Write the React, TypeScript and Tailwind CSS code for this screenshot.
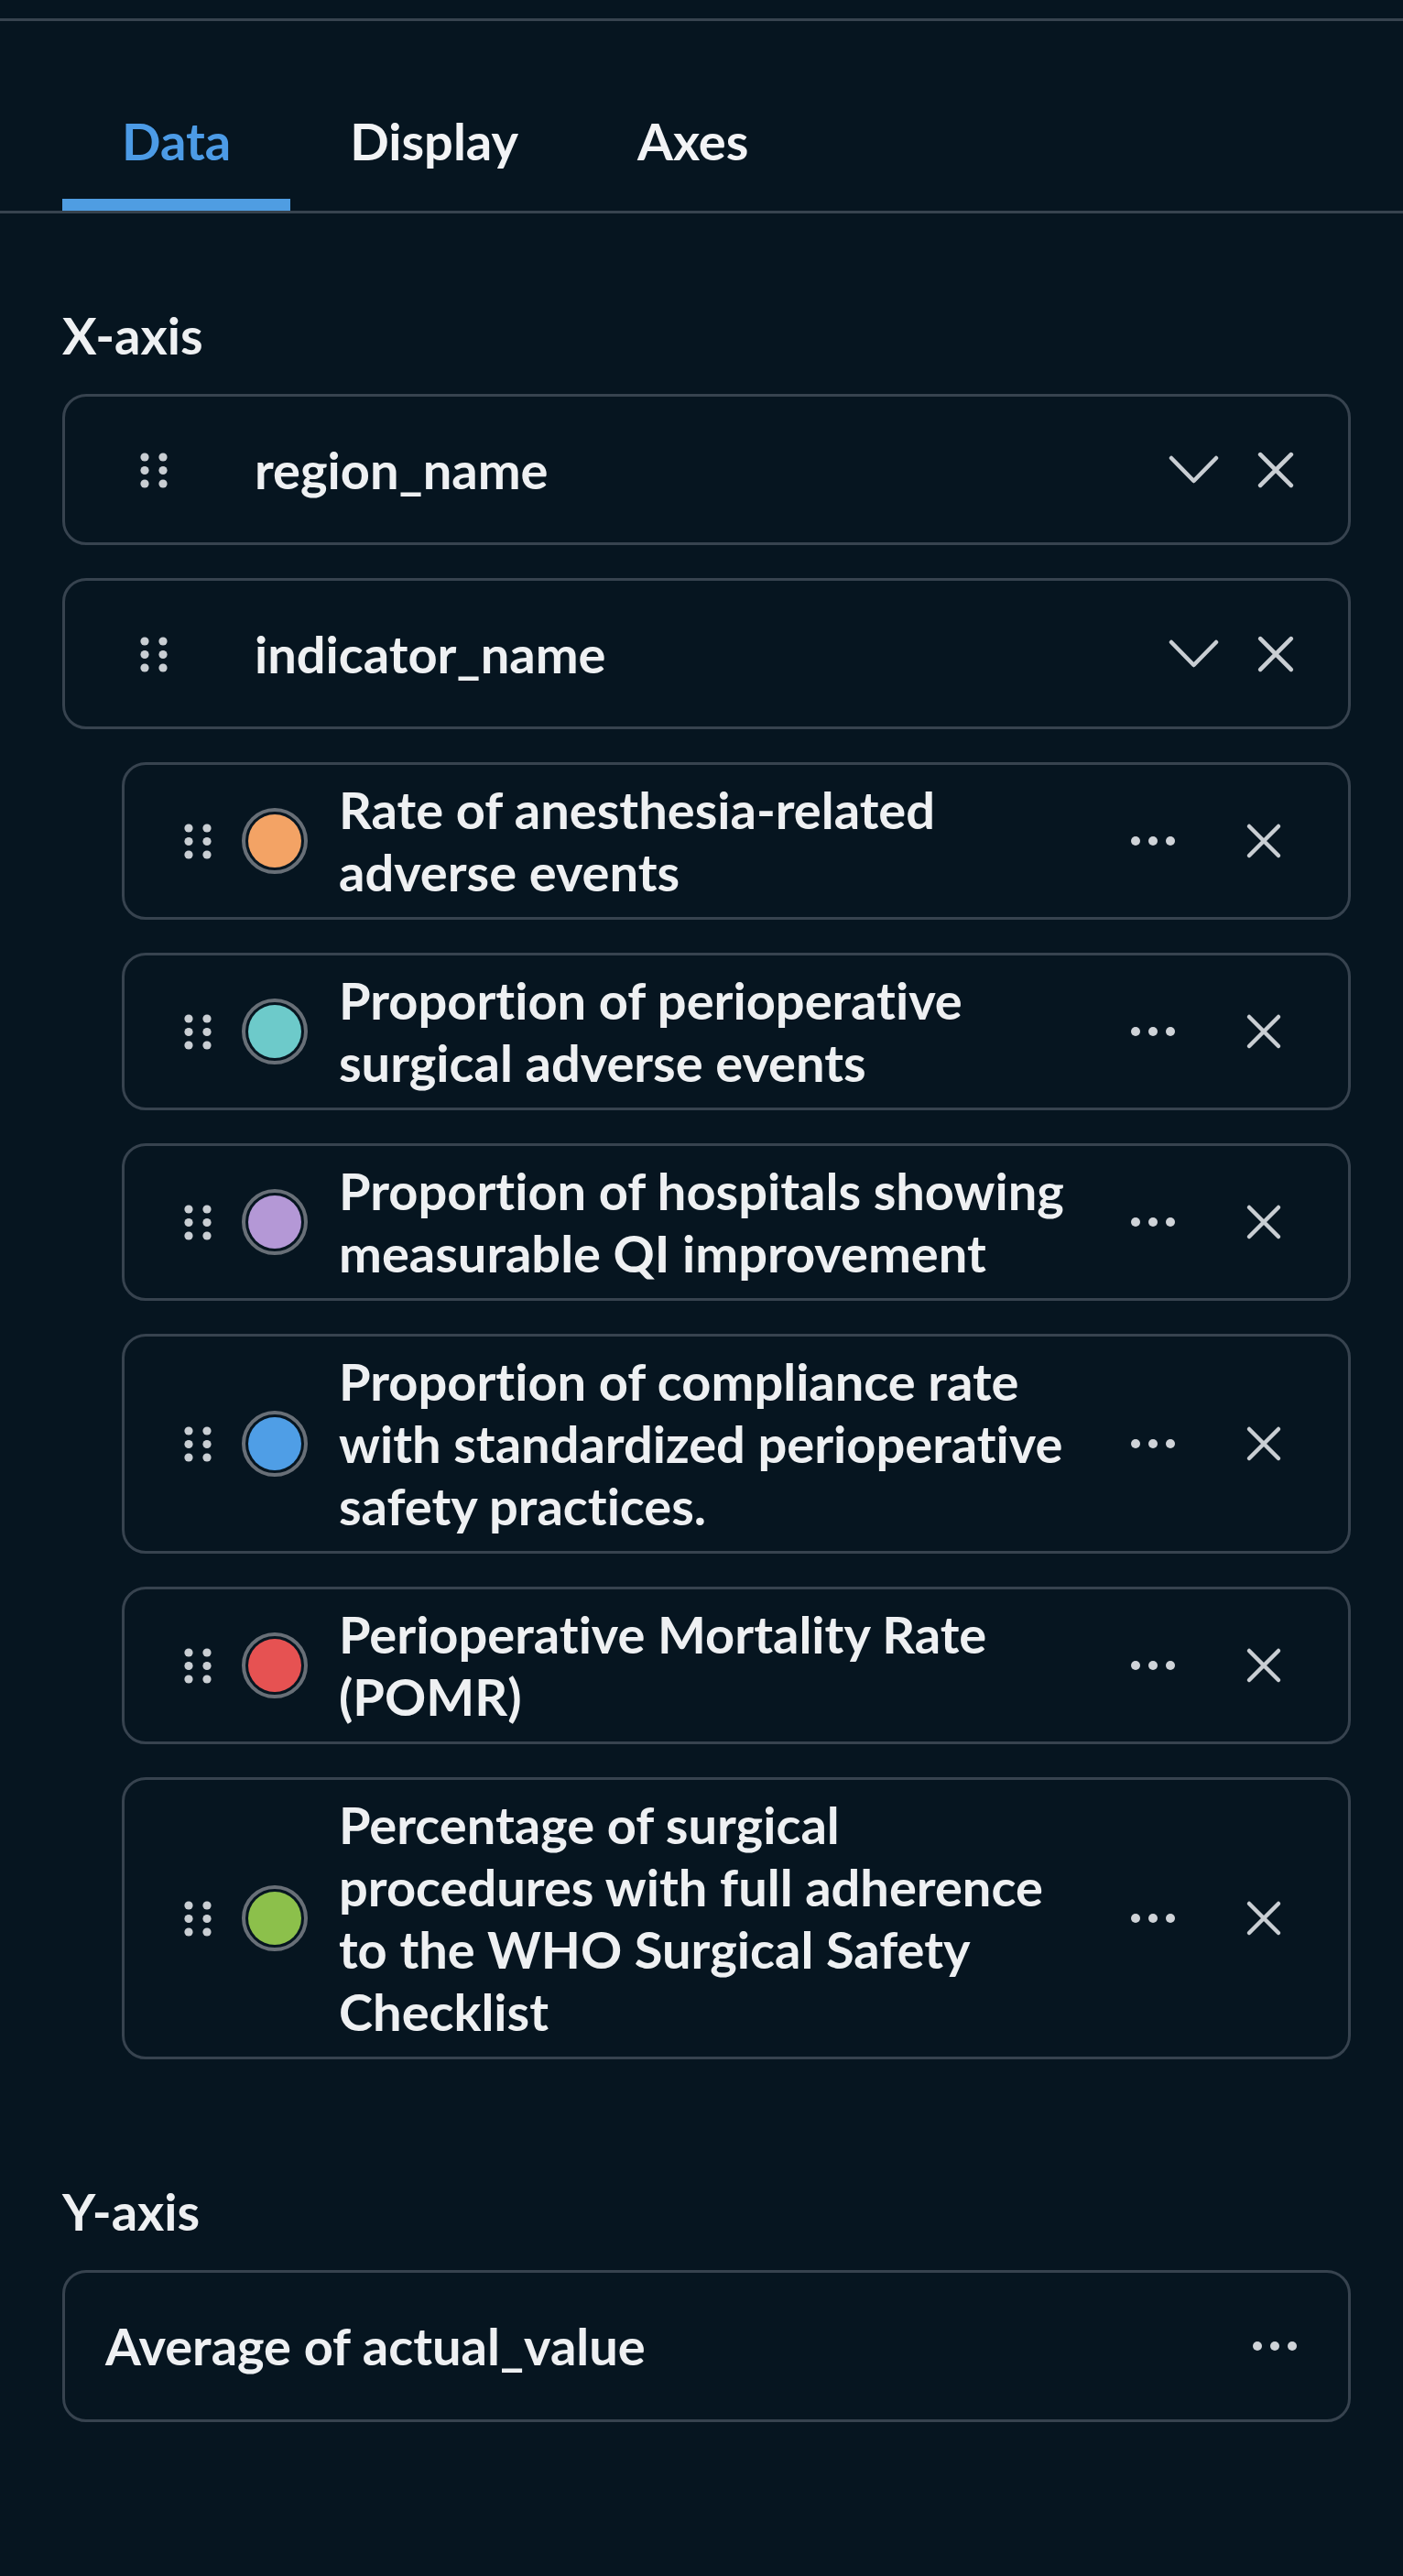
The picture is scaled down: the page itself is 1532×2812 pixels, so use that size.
import React from "react";

const Grip = () => (
  <svg width="32" height="40" viewBox="0 0 32 40" className="shrink-0">
    {[6, 26].map((cx) =>
      [6, 20.5, 35].map((cy) => (
        <circle key={`${cx}-${cy}`} cx={cx} cy={cy} r="4.6" fill="#c9ced3" />
      ))
    )}
  </svg>
);

const Dots = () => (
  <svg width="50" height="12" viewBox="0 0 50 12" className="shrink-0">
    <circle cx="6" cy="6" r="5" fill="#cfd3d8" />
    <circle cx="25" cy="6" r="5" fill="#cfd3d8" />
    <circle cx="44" cy="6" r="5" fill="#cfd3d8" />
  </svg>
);

const XIcon = ({ size = 40 }: { size?: number }) => (
  <svg width={size} height={size} viewBox="0 0 40 40" className="shrink-0">
    <path d="M4 4 L36 36 M36 4 L4 36" stroke="#c9ced3" strokeWidth="4.5" strokeLinecap="round" fill="none" />
  </svg>
);

const Chevron = () => (
  <svg width="55" height="31" viewBox="0 0 55 31" className="shrink-0">
    <path d="M3 3 L27.5 28 L52 3" stroke="#c9ced3" strokeWidth="4.5" strokeLinecap="round" strokeLinejoin="round" fill="none" />
  </svg>
);

const items = [
  { color: "#f3a365", text: "Rate of anesthesia-related adverse events" },
  { color: "#6dcaca", text: "Proportion of perioperative surgical adverse events" },
  { color: "#b498d6", text: "Proportion of hospitals showing measurable QI improvement" },
  { color: "#4f9ee6", text: "Proportion of compliance rate with standardized perioperative safety practices." },
  { color: "#e65252", text: "Perioperative Mortality Rate (POMR)" },
  { color: "#8cc04b", text: "Percentage of surgical procedures with full adherence to the WHO Surgical Safety Checklist" },
];

const FieldBox = ({ label }: { label: string }) => (
  <div className="flex h-[165px] items-center rounded-[26px] border-[3px] border-[#37434f] pl-[81px] pr-[58px]">
    <Grip />
    <div className="ml-[94px] flex-1 text-[56px] font-bold leading-[68px] text-[#eef0f2]">{label}</div>
    <Chevron />
    <div className="ml-[41px]">
      <XIcon size={42} />
    </div>
  </div>
);

export default function App() {
  return (
    <div className="min-h-[2812px] w-full bg-[#061520] font-['Lato','Noto_Sans',sans-serif] text-[#eef0f2] [font-variant-ligatures:none]">
      <div className="h-[23px] border-b-[3px] border-[#37434f]" />
      <div className="flex border-b-[3px] border-[#37434f] pl-[68px] pt-[97px]">
        <div className="border-b-[13px] border-[#4f9de2] px-[65px] pb-[29px] text-[56px] font-bold leading-[68px] text-[#4c9be6]">
          Data
        </div>
        <div className="border-b-[13px] border-transparent px-[65px] pb-[29px] text-[56px] font-bold leading-[68px] text-[#f2f3f5]">
          Display
        </div>
        <div className="border-b-[13px] border-transparent px-[65px] pb-[29px] text-[56px] font-bold leading-[68px] text-[#f2f3f5]">
          Axes
        </div>
      </div>

      <div className="pl-[68px] pr-[57px] pt-[99px]">
        <div className="mb-[30px] text-[56px] font-bold leading-[68px]">X-axis</div>
        <FieldBox label="region_name" />
        <div className="mt-[36px]">
          <FieldBox label="indicator_name" />
        </div>

        <div className="ml-[65px] flex flex-col gap-[36px] pt-[36px]">
          {items.map((it) => (
            <div
              key={it.text}
              className="flex items-center rounded-[26px] border-[3px] border-[#37434f] py-[15px] pl-[64px] pr-[72px]"
            >
              <Grip />
              <div className="ml-[32px] flex h-[72px] w-[72px] shrink-0 items-center justify-center rounded-full border-[4px] border-[#686f77] p-[3px]">
                <div className="h-full w-full rounded-full" style={{ backgroundColor: it.color }} />
              </div>
              <div className="ml-[34px] min-w-0 flex-1 text-[56px] font-bold leading-[68px] text-[#eef0f2]">
                {it.text}
              </div>
              <div className="ml-[55px]">
                <Dots />
              </div>
              <div className="ml-[76px]">
                <XIcon size={40} />
              </div>
            </div>
          ))}
        </div>

        <div className="mb-[30px] mt-[132px] text-[56px] font-bold leading-[68px]">Y-axis</div>
        <div className="flex h-[166px] items-center rounded-[26px] border-[3px] border-[#37434f] pl-[44px] pr-[55px]">
          <div className="flex-1 text-[56px] font-bold leading-[68px]">Average of actual_value</div>
          <Dots />
        </div>
      </div>
    </div>
  );
}
